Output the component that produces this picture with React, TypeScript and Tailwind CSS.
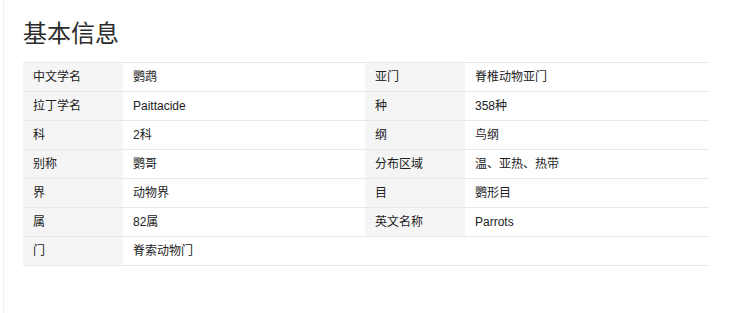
const rows: [string, string, string?, string?][] = [
  ["中文学名", "鹦鹉", "亚门", "脊椎动物亚门"],
  ["拉丁学名", "Paittacide", "种", "358种"],
  ["科", "2科", "纲", "鸟纲"],
  ["别称", "鹦哥", "分布区域", "温、亚热、热带"],
  ["界", "动物界", "目", "鹦形目"],
  ["属", "82属", "英文名称", "Parrots"],
  ["门", "脊索动物门"],
];

export default function App() {
  return (
    <div
      className="h-[313px] w-[736px] bg-white text-[#333]"
      style={{ fontFamily: '"Liberation Sans", "Noto Sans CJK SC", sans-serif' }}
    >
      <div className="ml-[3px] h-full border-l border-[#f2f2f2] pl-[19px] pt-[20px]">
        <h2 className="mb-[14px] h-[28px] text-[24px] font-normal leading-[28px] text-[#2b2b2b]">基本信息</h2>
        <table className="w-[686px] table-fixed border-collapse border-t border-[#e8e8e8] text-[12px] text-[#222]">
          <colgroup>
            <col className="w-[100px]" />
            <col className="w-[242px]" />
            <col className="w-[100px]" />
            <col className="w-[244px]" />
          </colgroup>
          <tbody>
            {rows.map(([k1, v1, k2, v2]) => (
              <tr key={k1} className="h-[29px] border-b border-[#e8e8e8]">
                <td className="bg-[#f5f5f5] px-[10px] align-middle">{k1}</td>
                <td className="px-[10px] align-middle">{v1}</td>
                <td className={`px-[10px] align-middle ${k2 ? "bg-[#f5f5f5]" : ""}`}>{k2}</td>
                <td className="px-[10px] align-middle">{v2}</td>
              </tr>
            ))}
          </tbody>
        </table>
      </div>
    </div>
  );
}
